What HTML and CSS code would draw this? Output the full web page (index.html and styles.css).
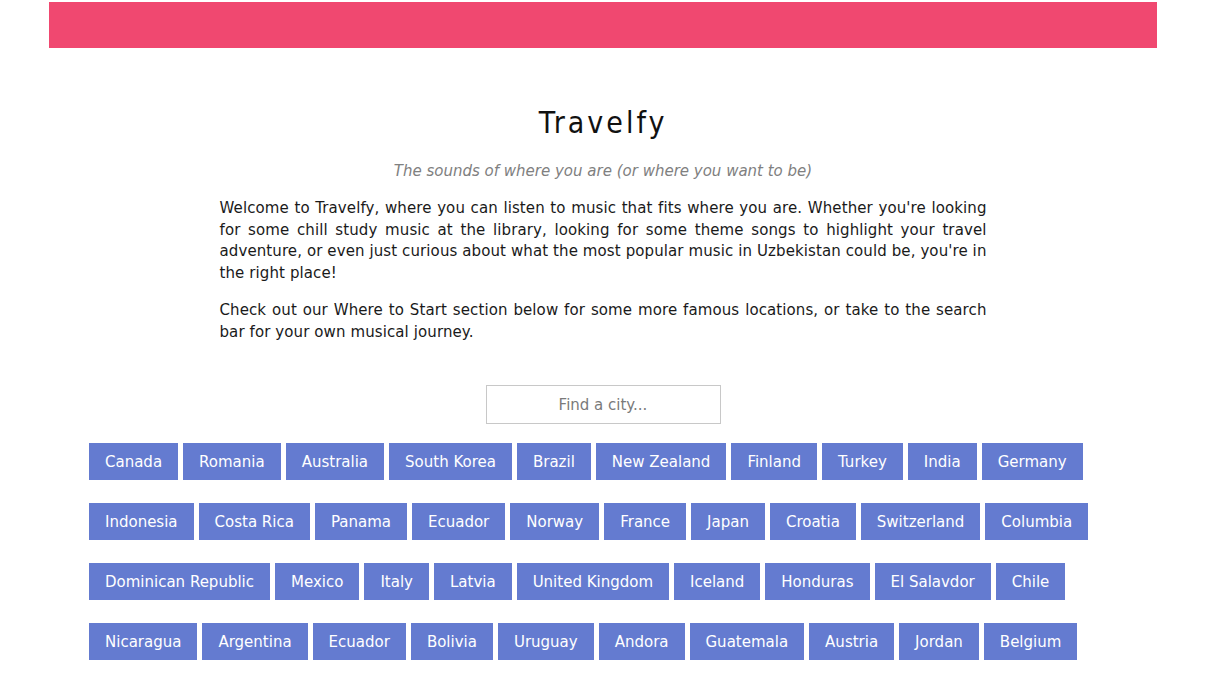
FILE: index.html
```html
<!DOCTYPE html>
<html>
<head>
<meta charset="utf-8">
<title>Travelfy</title>
<link rel="stylesheet" href="styles.css">
</head>
<body>
<div class="page">
  <div class="topbar"></div>
  <header class="hero">
    <h1 class="title">Travelfy</h1>
    <p class="tagline">The sounds of where you are (or where you want to be)</p>
    <div class="intro">
      <p>Welcome to Travelfy, where you can listen to music that fits where you are. Whether you're looking for some chill study music at the library, looking for some theme songs to highlight your travel adventure, or even just curious about what the most popular music in Uzbekistan could be, you're in the right place!</p>
      <p>Check out our Where to Start section below for some more famous locations, or take to the search bar for your own musical journey.</p>
    </div>
  </header>
  <div class="search-row">
    <input class="search" type="text" placeholder="Find a city...">
  </div>
  <div class="countries">
    <button class="country">Canada</button>
    <button class="country">Romania</button>
    <button class="country">Australia</button>
    <button class="country">South Korea</button>
    <button class="country">Brazil</button>
    <button class="country">New Zealand</button>
    <button class="country">Finland</button>
    <button class="country">Turkey</button>
    <button class="country">India</button>
    <button class="country">Germany</button>
    <button class="country">Indonesia</button>
    <button class="country">Costa Rica</button>
    <button class="country">Panama</button>
    <button class="country">Ecuador</button>
    <button class="country">Norway</button>
    <button class="country">France</button>
    <button class="country">Japan</button>
    <button class="country">Croatia</button>
    <button class="country">Switzerland</button>
    <button class="country">Columbia</button>
    <button class="country">Dominican Republic</button>
    <button class="country">Mexico</button>
    <button class="country">Italy</button>
    <button class="country">Latvia</button>
    <button class="country">United Kingdom</button>
    <button class="country">Iceland</button>
    <button class="country">Honduras</button>
    <button class="country">El Salavdor</button>
    <button class="country">Chile</button>
    <button class="country">Nicaragua</button>
    <button class="country">Argentina</button>
    <button class="country">Ecuador</button>
    <button class="country">Bolivia</button>
    <button class="country">Uruguay</button>
    <button class="country">Andora</button>
    <button class="country">Guatemala</button>
    <button class="country">Austria</button>
    <button class="country">Jordan</button>
    <button class="country">Belgium</button>
  </div>
</div>
</body>
</html>
```

FILE: styles.css
```css
html, body {
  margin: 0;
  padding: 0;
  background: #ffffff;
}

body {
  font-family: "DejaVu Sans", Verdana, sans-serif;
  color: #111;
}

.page {
  width: 1108px;
  margin: 2px 0 0 49px;
}

.topbar {
  height: 46px;
  background: #f04870;
}

.hero {
  display: flex;
  flex-direction: column;
  align-items: center;
}

.title {
  margin: 57px 0 0;
  font-family: "DejaVu Sans Condensed", "DejaVu Sans", sans-serif;
  font-weight: normal;
  font-size: 30px;
  line-height: 36px;
  letter-spacing: 3px;
  color: #111;
}

.tagline {
  margin: 20px 0 0;
  font-style: italic;
  font-size: 15px;
  line-height: 20px;
  color: #808080;
}

.intro {
  width: 767px;
  margin-top: 17px;
  font-size: 15px;
  line-height: 21.7px;
  letter-spacing: 0.1px;
  text-align: justify;
  color: #1a1a1a;
}

.intro p {
  margin: 0 0 15px;
}

.search-row {
  display: flex;
  justify-content: center;
  margin-top: 27px;
}

.search {
  width: 235px;
  height: 39px;
  box-sizing: border-box;
  border: 1px solid #c8c8c8;
  background: #fff;
  font-family: inherit;
  font-size: 15px;
  text-align: center;
  color: #333;
  outline: none;
}

.search::placeholder {
  color: #7a7a7a;
}

.countries {
  display: flex;
  flex-wrap: wrap;
  column-gap: 5px;
  row-gap: 23px;
  padding: 19px 40px 0;
}

.country {
  height: 37px;
  padding: 0 16px;
  border: none;
  background: #647bd0;
  color: #ffffff;
  font-family: inherit;
  font-size: 15px;
  cursor: pointer;
}
```
